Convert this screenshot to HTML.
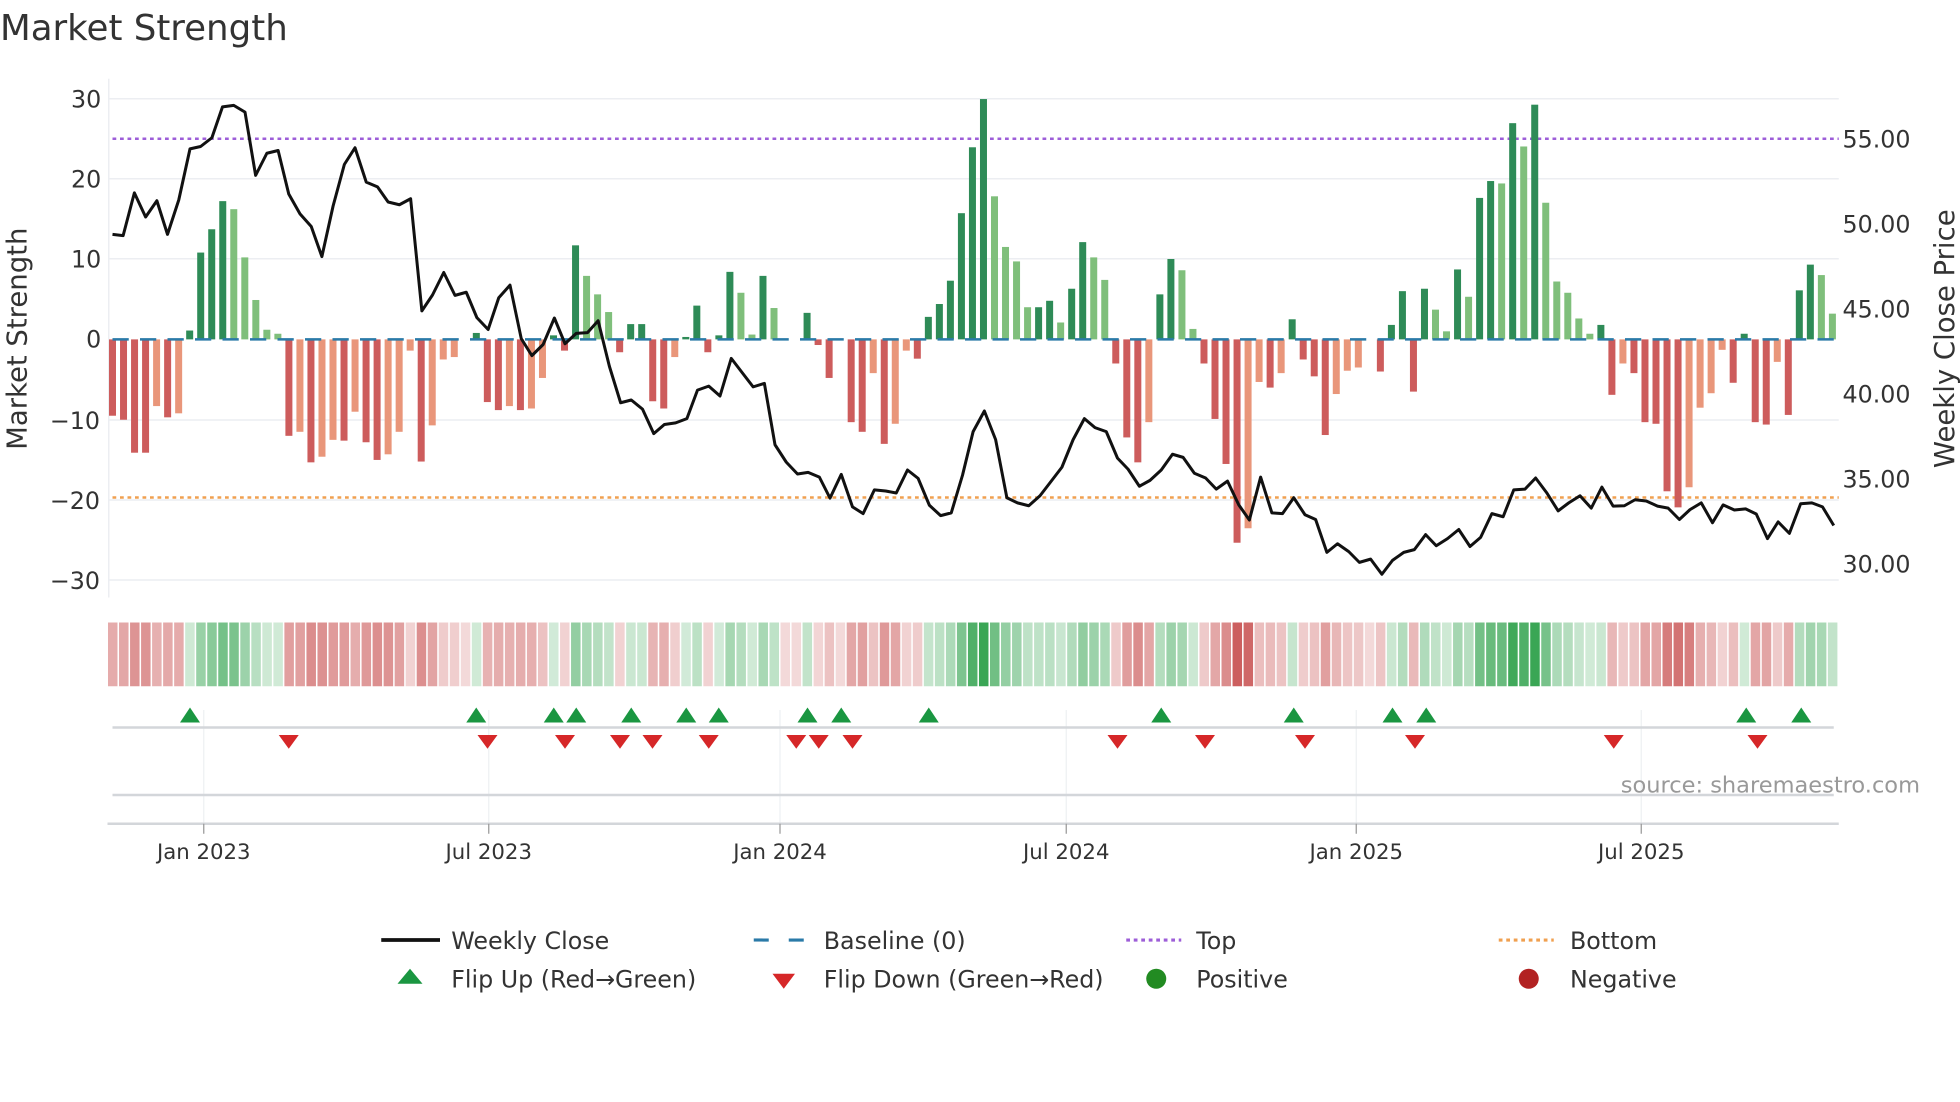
<!DOCTYPE html>
<html><head><meta charset="utf-8"><style>
html,body{margin:0;padding:0;background:#fff;}
svg{display:block;font-family:"DejaVu Sans","Liberation Sans",sans-serif;}
</style></head><body>
<svg id="s" width="1960" height="1102" viewBox="0 0 1568 881.6" xmlns="http://www.w3.org/2000/svg">
<rect width="1568" height="882" fill="#fff"/>
<text x="0" y="32" font-size="28.5" fill="#333">Market Strength</text>
<g stroke="#eceef2" stroke-width="1.2">
<line x1="87" y1="79" x2="1471" y2="79"/><line x1="87" y1="143" x2="1471" y2="143"/>
<line x1="87" y1="207" x2="1471" y2="207"/><line x1="87" y1="336" x2="1471" y2="336"/>
<line x1="87" y1="400" x2="1471" y2="400"/><line x1="87" y1="464" x2="1471" y2="464"/>
<line x1="87" y1="63" x2="87" y2="478"/>
</g>
<g font-size="19" fill="#333" text-anchor="end">
<text x="81" y="86">30</text><text x="81" y="150">20</text><text x="81" y="214">10</text>
<text x="81" y="278">0</text><text x="80" y="343">−10</text><text x="80" y="407">−20</text><text x="80" y="471">−30</text>
</g>
<g font-size="19" fill="#333">
<text x="1474" y="118">55.00</text><text x="1474" y="186">50.00</text><text x="1474" y="254">45.00</text>
<text x="1474" y="322">40.00</text><text x="1474" y="390">35.00</text><text x="1474" y="458">30.00</text>
</g>
<text transform="translate(21,271) rotate(-90)" font-size="22" fill="#333" text-anchor="middle">Market Strength</text>
<text transform="translate(1563,271) rotate(-90)" font-size="22" fill="#333" text-anchor="middle">Weekly Close Price</text>
<line x1="90" y1="111" x2="1471" y2="111" stroke="#9d5ed8" stroke-width="2" stroke-dasharray="3 3"/>
<line x1="90" y1="398" x2="1471" y2="398" stroke="#f0a050" stroke-width="2" stroke-dasharray="3 3"/>
<g id="bars"></g>
<line x1="90" y1="271.5" x2="1471" y2="271.5" stroke="#2a7aa8" stroke-width="2" stroke-dasharray="13 9"/>
<polyline id="price" fill="none" stroke="#111" stroke-width="2.4" stroke-linejoin="round"/>
<g id="strip"></g>
<g stroke="#eef0f3" stroke-width="1">
<line x1="163" y1="568" x2="163" y2="659"/><line x1="391" y1="568" x2="391" y2="659"/>
<line x1="624" y1="568" x2="624" y2="659"/><line x1="853" y1="568" x2="853" y2="659"/>
<line x1="1085" y1="568" x2="1085" y2="659"/><line x1="1313" y1="568" x2="1313" y2="659"/>
</g>
<line x1="90" y1="582" x2="1467" y2="582" stroke="#d3d6da" stroke-width="2"/>
<line x1="90" y1="636" x2="1467" y2="636" stroke="#d3d6da" stroke-width="2"/>
<line x1="86" y1="659" x2="1471" y2="659" stroke="#d3d6da" stroke-width="2"/>
<g stroke="#999" stroke-width="1">
<line x1="163" y1="659" x2="163" y2="667"/><line x1="391" y1="659" x2="391" y2="667"/>
<line x1="624" y1="659" x2="624" y2="667"/><line x1="853" y1="659" x2="853" y2="667"/>
<line x1="1085" y1="659" x2="1085" y2="667"/><line x1="1313" y1="659" x2="1313" y2="667"/>
</g>
<g font-size="17" fill="#333" text-anchor="middle">
<text x="163" y="687">Jan 2023</text><text x="391" y="687">Jul 2023</text><text x="624" y="687">Jan 2024</text>
<text x="853" y="687">Jul 2024</text><text x="1085" y="687">Jan 2025</text><text x="1313" y="687">Jul 2025</text>
</g>
<text x="1536" y="634" font-size="18" fill="#999" text-anchor="end">source: sharemaestro.com</text>
<g id="flips"></g>
<g font-size="19" fill="#333">
<line x1="305" y1="752" x2="352" y2="752" stroke="#111" stroke-width="3"/>
<text x="361" y="759">Weekly Close</text>
<line x1="603" y1="752" x2="647" y2="752" stroke="#2a7aa8" stroke-width="2.5" stroke-dasharray="12 16"/>
<text x="659" y="759">Baseline (0)</text>
<line x1="901" y1="752" x2="945" y2="752" stroke="#9d5ed8" stroke-width="2.5" stroke-dasharray="3 3"/>
<text x="957" y="759">Top</text>
<line x1="1199" y1="752" x2="1243" y2="752" stroke="#f0a050" stroke-width="2.5" stroke-dasharray="3 3"/>
<text x="1256" y="759">Bottom</text>
<polygon points="328,775 338,787 318,787" fill="#1a9641"/>
<text x="361" y="790">Flip Up (Red→Green)</text>
<polygon points="618,779 636,779 627,791" fill="#d62728"/>
<text x="659" y="790">Flip Down (Green→Red)</text>
<circle cx="925" cy="783" r="8" fill="#228b22"/>
<text x="957" y="790">Positive</text>
<circle cx="1223" cy="783" r="8" fill="#b22222"/>
<text x="1256" y="790">Negative</text>
</g>
</svg>
<script>
var NS="http://www.w3.org/2000/svg";
var V=[-9.5,-10,-14.1,-14.1,-8.3,-9.7,-9.2,1.1,10.8,13.7,17.2,16.2,10.2,4.9,1.2,0.7,-12,-11.5,-15.3,-14.6,-12.5,-12.6,-9,-12.8,-15,-14.3,-11.5,-1.4,-15.2,-10.7,-2.5,-2.2,0,0.8,-7.8,-8.8,-8.3,-8.8,-8.6,-4.8,0.5,-1.4,11.7,7.9,5.6,3.4,-1.6,1.9,1.9,-7.7,-8.6,-2.2,0.3,4.2,-1.6,0.5,8.4,5.8,0.6,7.9,3.9,0,0,3.3,-0.7,-4.8,0,-10.3,-11.5,-4.2,-13,-10.5,-1.4,-2.4,2.8,4.4,7.3,15.7,23.9,
29.9,17.8,11.5,9.7,4,4,4.8,2.1,6.3,12.1,10.2,7.4,-3,-12.2,-15.3,-10.3,5.6,10,8.6,1.3,-3,-9.9,-15.5,-25.3,-23.5,-5.3,-6,-4.2,2.5,-2.5,-4.6,-11.9,-6.8,-3.9,-3.5,0,-4,1.8,6,-6.5,6.3,3.7,1,8.7,5.3,17.6,19.7,19.4,26.9,24,29.2,17,7.2,5.8,2.6,0.7,1.8,-6.9,-3,-4.2,-10.3,-10.5,-18.9,-20.9,-18.4,-8.5,-6.7,-1.3,-5.4,0.7,-10.3,-10.6,-2.8,-9.4,6.1,9.3,8,3.2];
var L="DDDDLDLDDD"+"DLLLLLDLDL"+"LDLDDLLLDL"+"LLDDDDLDLL"+"DDDLLLDDDD"+"DLDDDDDLLD"+"LDDDDDDDDL"+"DLLDDDDDD"+"DLLLLDDLDD"+"LLDDDLDDLL"+"DDDDLLDLDD"+"DDLLLDDDDD"+"DLLDLDDLDL"+"DLLLLLDDLD"+"DDDDLLLLDD"+"DDLDDDLL";
var bars=document.getElementById("bars"),strip=document.getElementById("strip");
for(var i=0;i<V.length;i++){
 var v=V[i],x=90+i*8.82,lt=L[i]=="L";
 if(v!=0){var r=document.createElementNS(NS,"rect");var h=Math.abs(v)*6.43;
 r.setAttribute("x",x-2.8);r.setAttribute("width",5.6);
 r.setAttribute("y",v>0?271.5-h:271.5);r.setAttribute("height",h);
 r.setAttribute("fill",v>0?(lt?"#7fbf7b":"#2e8b57"):(lt?"#e9967a":"#cd5c5c"));bars.appendChild(r);}
 var s=document.createElementNS(NS,"rect");s.setAttribute("x",x-3.6);s.setAttribute("width",7.6);
 s.setAttribute("y",498);s.setAttribute("height",51);
 var a=0.22+Math.min(1,Math.abs(v)/28)*0.78;
 s.setAttribute("fill",v>0?"#3aa655":"#c85050");s.setAttribute("fill-opacity",a.toFixed(2));strip.appendChild(s);
}
var P1=[[180,592],[197,595],[215,487],[233,548],[251,507],[268,592],[286,505],[304,376],[321,370],[339,348],[356,270],[374,266],[392,283],[409,443],[427,387],[445,380],[462,490],[480,540],[498,572],[515,648],[533,520],[551,415],[568,373],[586,460],[604,472],[621,510],[639,517],[657,502],[675,785],[692,745],[710,688],[728,746],[746,738],[763,802],[781,832],[798,752],[816,720],[834,855],[851,898],[869,870],[887,803],[904,868],[922,842],[940,840],[957,810],[975,925],[993,1017],[1010,1010],[1028,1033],[1046,1095],[1063,1072],[1081,1068],[1099,1057],[1116,985],[1134,975],[1152,1000],[1170,905],[1187,940],[1205,977],[1223,968],[1240,1123],[1258,1167],[1276,1197],[1293,1193],[1311,1205],[1328,1258],[1346,1198],[1364,1280],[1381,1297],[1399,1237],[1417,1240],[1434,1245],[1452,1187],[1469,1208],[1487,1276],[1505,1302],[1522,1295],[1540,1200],[1557,1090]];
var P2=[[7,1038],[25,1110],[43,1257],[60,1270],[78,1277],[96,1252],[114,1215],[131,1180],[149,1110],[167,1057],[184,1080],[202,1090],[220,1157],[237,1185],[255,1228],[272,1213],[290,1187],[308,1147],[325,1155],[343,1195],[361,1207],[378,1235],[396,1215],[414,1275],[431,1313],[449,1205],[467,1295],[484,1297],[502,1257],[520,1300],[537,1312],[555,1395],[572,1373],[590,1393],[607,1420],[625,1412],[643,1450],[660,1415],[678,1395],[695,1388],[713,1350],[730,1378],[748,1360],[766,1337],[784,1380],[801,1357],[819,1297],[837,1305],[854,1237],[872,1235],[889,1207],[907,1245],[925,1290],[942,1270],[960,1252],[978,1283],[995,1230],[1013,1278],[1031,1277],[1048,1262],[1066,1265],[1084,1278],[1101,1283],[1119,1312],[1136,1287],[1154,1270],[1172,1320],[1189,1275],[1207,1288],[1225,1285],[1242,1298],[1260,1360],[1277,1318],[1295,1347],[1313,1272],[1331,1270],[1348,1280],[1366,1327]];
var K=271.5/857,pts=[];
P1.forEach(function(p){pts.push((p[0]/2).toFixed(1)+","+(p[1]*K).toFixed(1));});
P2.forEach(function(p){pts.push((784+p[0]/2).toFixed(1)+","+(p[1]*K).toFixed(1));});
document.getElementById("price").setAttribute("points",pts.join(" "));
var fl=document.getElementById("flips");
[152,381,443,461,505,549,575,646,673,743,929,1035,1114,1141,1397,1441].forEach(function(x){
 var p=document.createElementNS(NS,"polygon");p.setAttribute("points",x+",566 "+(x+8)+",578 "+(x-8)+",578");p.setAttribute("fill","#1a9641");fl.appendChild(p);});
[231,390,452,496,522,567,637,655,682,894,964,1044,1132,1291,1406].forEach(function(x){
 var p=document.createElementNS(NS,"polygon");p.setAttribute("points",(x-8)+",588 "+(x+8)+",588 "+x+",599");p.setAttribute("fill","#d62728");fl.appendChild(p);});
</script>
</body></html>
